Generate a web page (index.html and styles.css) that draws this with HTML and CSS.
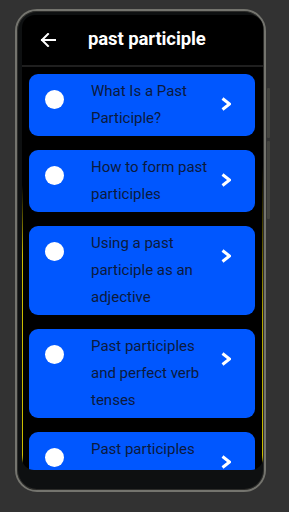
FILE: index.html
```html
<!DOCTYPE html>
<html lang="en">
<head>
<meta charset="utf-8">
<title>past participle</title>
<link rel="stylesheet" href="styles.css">
</head>
<body>
<div class="phone">
  <span class="side-btn side-btn-1"></span>
  <span class="side-btn side-btn-2"></span>
  <div class="screen">
    <header class="appbar">
      <svg class="back" width="16" height="14" viewBox="0 0 16 14" aria-hidden="true">
        <path d="M15 7H2 M8 1L2 7L8 13" fill="none" stroke="#fff" stroke-width="2" stroke-linecap="square" stroke-linejoin="miter"/>
      </svg>
      <h1 class="title">past participle</h1>
    </header>
    <ul class="list">
      <li class="card"><span class="dot"></span><span class="label">What Is a Past Participle?</span><svg class="chev" width="10" height="14" viewBox="0 0 10 14"><path d="M1.5 1.5L8.5 7L1.5 12.5" fill="none" stroke="#fff" stroke-width="3"/></svg></li>
      <li class="card"><span class="dot"></span><span class="label">How to form past participles</span><svg class="chev" width="10" height="14" viewBox="0 0 10 14"><path d="M1.5 1.5L8.5 7L1.5 12.5" fill="none" stroke="#fff" stroke-width="3"/></svg></li>
      <li class="card"><span class="dot"></span><span class="label">Using a past participle as an adjective</span><svg class="chev" width="10" height="14" viewBox="0 0 10 14"><path d="M1.5 1.5L8.5 7L1.5 12.5" fill="none" stroke="#fff" stroke-width="3"/></svg></li>
      <li class="card"><span class="dot"></span><span class="label">Past participles and perfect verb tenses</span><svg class="chev" width="10" height="14" viewBox="0 0 10 14"><path d="M1.5 1.5L8.5 7L1.5 12.5" fill="none" stroke="#fff" stroke-width="3"/></svg></li>
      <li class="card"><span class="dot"></span><span class="label">Past participles and the passive voice</span><svg class="chev" width="10" height="14" viewBox="0 0 10 14"><path d="M1.5 1.5L8.5 7L1.5 12.5" fill="none" stroke="#fff" stroke-width="3"/></svg></li>
    </ul>
  </div>
</div>
</body>
</html>
```
FILE: styles.css
```css
* { box-sizing: border-box; }
html, body { margin: 0; padding: 0; }
body {
  background: #323232;
  width: 289px;
  height: 512px;
  overflow: hidden;
  font-family: Roboto, "Noto Sans", sans-serif;
}
.phone {
  position: relative;
  margin: 9px 0 0 15px;
  width: 251px;
  height: 483px;
  border: 2px solid #74746e;
  border-radius: 22px;
  background: #0e1011;
  box-shadow: inset 0 0 0 1px #2c2c2a;
  padding: 4px 1px 20px 5px;
}
.side-btn {
  position: absolute;
  right: -6px;
  width: 3px;
  background: #44443f;
  border-radius: 1px;
}
.side-btn-1 { top: 77px; height: 50px; }
.side-btn-2 { top: 130px; height: 78px; }
.screen {
  height: 455px;
  border-radius: 13px 13px 12px 12px;
  overflow: hidden;
  background:
    linear-gradient(to bottom, rgba(200,188,0,0) 0, rgba(200,188,0,0) 170px, #cbbd00 240px, #cbbd00 440px, rgba(200,188,0,0) 455px) left top / 1px 100% no-repeat,
    linear-gradient(to bottom, rgba(200,188,0,0) 0, rgba(200,188,0,0) 150px, #b3a500 300px, #cbbd00 440px, rgba(200,188,0,0) 455px) right top / 1px 100% no-repeat,
    #000;
}
.appbar {
  height: 52px;
  border-bottom: 2px solid #1f1f1f;
  display: flex;
  align-items: center;
  padding-left: 18px;
  gap: 32px;
}
.back { display: block; }
.title {
  margin: 0;
  color: #fff;
  font-size: 18.5px;
  font-weight: 700;
  letter-spacing: -0.1px;
  line-height: 1;
  padding-bottom: 1px;
}
.list {
  list-style: none;
  margin: 0;
  padding: 7px 8px 0 7px;
  display: flex;
  flex-direction: column;
  gap: 14px;
}
.card {
  display: flex;
  align-items: flex-start;
  background: #0057ff;
  border-radius: 9px;
  padding: 4px 24px 4px 16px;
}
.dot {
  flex: none;
  width: 19px;
  height: 19px;
  border-radius: 50%;
  background: #fff;
  margin-top: 12px;
}
.label {
  flex: 1;
  margin: 0 8px 0 27px;
  color: #0c1a3d;
  font-size: 15px;
  line-height: 27px;
}
.chev {
  flex: none;
  display: block;
  margin-top: 19px;
}
```
